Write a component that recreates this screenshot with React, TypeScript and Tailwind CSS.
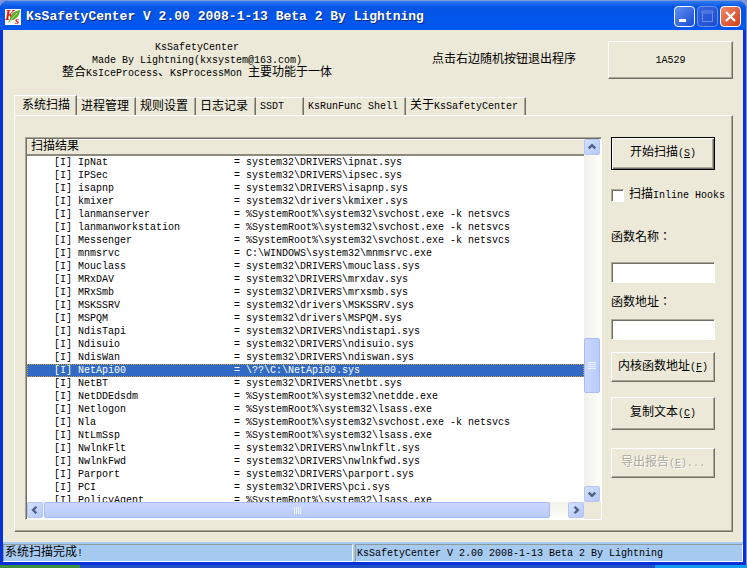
import React from 'react';

interface Entry {
    name: string;
    path: string;
    selected?: boolean;
}

const drv = (file: string) => `system32\\DRIVERS\\${file}`;
const root = (file: string) => `%SystemRoot%\\system32\\${file}`;

const entries: Entry[] = [
    { name: 'IpNat', path: drv('ipnat.sys') },
    { name: 'IPSec', path: drv('ipsec.sys') },
    { name: 'isapnp', path: drv('isapnp.sys') },
    { name: 'kmixer', path: 'system32\\drivers\\kmixer.sys' },
    { name: 'lanmanserver', path: root('svchost.exe -k netsvcs') },
    { name: 'lanmanworkstation', path: root('svchost.exe -k netsvcs') },
    { name: 'Messenger', path: root('svchost.exe -k netsvcs') },
    { name: 'mnmsrvc', path: 'C:\\WINDOWS\\system32\\mnmsrvc.exe' },
    { name: 'Mouclass', path: drv('mouclass.sys') },
    { name: 'MRxDAV', path: drv('mrxdav.sys') },
    { name: 'MRxSmb', path: drv('mrxsmb.sys') },
    { name: 'MSKSSRV', path: 'system32\\drivers\\MSKSSRV.sys' },
    { name: 'MSPQM', path: 'system32\\drivers\\MSPQM.sys' },
    { name: 'NdisTapi', path: drv('ndistapi.sys') },
    { name: 'Ndisuio', path: drv('ndisuio.sys') },
    { name: 'NdisWan', path: drv('ndiswan.sys') },
    { name: 'NetApi00', path: '\\??\\C:\\NetApi00.sys', selected: true },
    { name: 'NetBT', path: drv('netbt.sys') },
    { name: 'NetDDEdsdm', path: root('netdde.exe') },
    { name: 'Netlogon', path: root('lsass.exe') },
    { name: 'Nla', path: root('svchost.exe -k netsvcs') },
    { name: 'NtLmSsp', path: root('lsass.exe') },
    { name: 'NwlnkFlt', path: drv('nwlnkflt.sys') },
    { name: 'NwlnkFwd', path: drv('nwlnkfwd.sys') },
    { name: 'Parport', path: drv('parport.sys') },
    { name: 'PCI', path: drv('pci.sys') },
    { name: 'PolicyAgent', path: root('lsass.exe') },
];

const tabs = [
    { label: '系统扫描', width: 'w-[63px]' },
    { label: '进程管理', width: 'w-[59px]' },
    { label: '规则设置', width: 'w-[60px]' },
    { label: '日志记录', width: 'w-[60px]' },
    { label: 'SSDT', width: 'w-12' },
    { label: 'KsRunFunc Shell', width: 'w-[102px]' },
    { label: '关于KsSafetyCenter', width: 'w-[120px]' },
];

const Mixed: React.FC<{ text: string }> = ({ text }) => (
    <>
        {text.split(/([\u3000-\uffef]+)/).filter(Boolean).map((run, i) =>
            /[\u3000-\uffef]/.test(run) ? (
                <span key={i} className="text-[12px]">{run}</span>
            ) : (
                <span key={i} className="text-[10px]">{run}</span>
            )
        )}
    </>
);

const raised = 'border border-t-white border-l-white border-r-[#716f64] border-b-[#716f64] bg-[#ece9d8] shadow-[inset_-1px_-1px_0_#aca899]';
const sunken = 'border border-t-[#aca899] border-l-[#aca899] border-r-white border-b-white bg-white shadow-[inset_1px_1px_0_#716f64]';

interface PushButtonProps {
    label: string;
    hotkey: string;
    suffix?: string;
    className: string;
    disabled?: boolean;
}

const PushButton: React.FC<PushButtonProps> = ({ label, hotkey, suffix = '', className, disabled }) => (
    <button
        type="button"
        disabled={disabled}
        className={`w-[104px] whitespace-nowrap leading-4 disabled:text-[#aca899] disabled:[text-shadow:1px_1px_0_white] ${className}`}
    >
        <span className="text-[12px]">{label}</span>
        <span className="text-[10px]">(<u>{hotkey}</u>){suffix}</span>
    </button>
);

const arrows = {
    up: 'M4 9l3.5-3.5L11 9',
    down: 'M4 6l3.5 3.5L11 6',
    left: 'M9 4L5.5 7.5 9 11',
    right: 'M6 4l3.5 3.5L6 11',
};

const ScrollButton: React.FC<{ dir: keyof typeof arrows }> = ({ dir }) => (
    <button
        type="button"
        aria-label={`Scroll ${dir}`}
        className="size-4 shrink-0 rounded-xs border border-[#b4c6f5] bg-gradient-to-br from-[#d6e1ff] to-[#b5c8fb]"
    >
        <svg viewBox="0 0 15 15" className="size-full" fill="none" stroke="#4d6185" strokeWidth="2.6">
            <path d={arrows[dir]} />
        </svg>
    </button>
);

const AppIcon = () => (
    <svg viewBox="0 0 16 16" className="size-4 shrink-0">
        <rect width="16" height="16" fill="#fff" />
        <text x="0" y="11" fontSize="14" fontWeight="bold" fontStyle="italic" fontFamily="Liberation Serif, serif" fill="#e0141c">K</text>
        <text x="10" y="15" fontSize="11" fontWeight="bold" fontStyle="italic" fontFamily="Liberation Serif, serif" fill="#e0141c">s</text>
        <path d="M5 10C5 5 9 2 15 1c0 5-3 9-8 10l-4 3z" fill="#5fae2e" />
        <path d="M5 12l7-8" stroke="#b9dd7a" />
    </svg>
);

const TitleBar = () => (
    <header className="flex h-[29px] shrink-0 items-center gap-[5px] rounded-t-lg bg-gradient-to-b from-[#2f7bf0] via-[#0355e6] via-20% to-[#0357f0] pt-[2px] pr-[5px] pl-[5px]">
        <AppIcon />
        <h1 className="flex-1 truncate text-[13px] font-bold text-white [text-shadow:1px_1px_0_#0a2a80]">
            KsSafetyCenter V 2.00 2008-1-13 Beta 2 By Lightning
        </h1>
        <div className="flex gap-[2px]">
            <button type="button" aria-label="Minimize" className="size-[21px] rounded-sm border border-white bg-gradient-to-br from-[#5f8ff5] to-[#1c4bd0]">
                <svg viewBox="0 0 19 19"><path d="M4 12h7v3H4z" fill="#fff" /></svg>
            </button>
            <button type="button" aria-label="Maximize" disabled className="size-[21px] rounded-sm border border-[#6d90ee] bg-gradient-to-br from-[#3565e0] to-[#1c4bd0]">
                <svg viewBox="0 0 19 19"><path d="M4 4h11v2H4zM4.5 6v8.5h10V6" fill="none" stroke="#6b8ce8" /></svg>
            </button>
            <button type="button" aria-label="Close" className="size-[21px] rounded-sm border border-white bg-gradient-to-br from-[#ee8a6a] to-[#cf3a12]">
                <svg viewBox="0 0 19 19"><path d="M5 5l9 9M14 5l-9 9" stroke="#fff" strokeWidth="2.2" /></svg>
            </button>
        </div>
    </header>
);

const ResultList = () => (
    <div className={`flex min-w-0 flex-1 flex-col pt-px pl-px ${sunken}`}>
        <div className="flex min-h-0 flex-1">
            <div className="h-full min-w-0 flex-1 overflow-hidden">
                <table className="w-full border-separate border-spacing-0">
                    <thead>
                        <tr>
                            <th className="h-[17px] border-t border-b-2 border-t-white border-b-[#8d8a7b] bg-[#ece9d8] p-0 pl-1 text-left font-normal leading-[14px]">
                                <Mixed text="扫描结果" />
                            </th>
                        </tr>
                    </thead>
                    <tbody>
                        {entries.map((entry) => (
                            <tr key={entry.name}>
                                <td
                                    className={`h-[13px] p-0 pl-[27px] text-[10px] leading-[13px] whitespace-pre ${
                                        entry.selected ? 'bg-[#316ac5] text-white outline-1 -outline-offset-1 outline-dotted outline-[#c99a4a]' : ''
                                    }`}
                                >
                                    {`[I] ${entry.name.padEnd(26)}= ${entry.path}`}
                                </td>
                            </tr>
                        ))}
                    </tbody>
                </table>
            </div>
            <div className="flex w-[17px] flex-col bg-gradient-to-r from-[#f1f0ea] to-[#fefefb]">
                <ScrollButton dir="up" />
                <div className="flex-[182]" />
                <div className="flex h-[55px] w-4 flex-col items-center justify-center gap-px rounded-xs border border-[#a6bcf5] bg-gradient-to-r from-[#cad8ff] to-[#b8cbfc]">
                    <i className="h-px w-2 bg-[#eef4fe]" />
                    <i className="h-px w-2 bg-[#eef4fe]" />
                    <i className="h-px w-2 bg-[#eef4fe]" />
                    <i className="h-px w-2 bg-[#eef4fe]" />
                </div>
                <div className="flex-[92]" />
                <ScrollButton dir="down" />
            </div>
        </div>
        <div className="flex h-[17px] shrink-0 bg-[#ece9d8]">
            <div className="flex flex-1 gap-px bg-gradient-to-b from-[#f1f0ea] to-[#fefefb]">
                <ScrollButton dir="left" />
                <div className="flex h-4 flex-[506] items-center justify-center gap-px rounded-xs border border-[#a6bcf5] bg-gradient-to-b from-[#cad8ff] to-[#b8cbfc]">
                    <i className="h-[7px] w-px bg-[#eef4fe]" />
                    <i className="h-[7px] w-px bg-[#eef4fe]" />
                    <i className="h-[7px] w-px bg-[#eef4fe]" />
                    <i className="h-[7px] w-px bg-[#eef4fe]" />
                </div>
                <div className="flex-[16]" />
                <ScrollButton dir="right" />
            </div>
            <div className="w-[17px]" />
        </div>
    </div>
);

const SidePanel = () => (
    <div className="flex w-[104px] shrink-0 flex-col leading-4">
        <PushButton
            label="开始扫描"
            hotkey="S"
            className="h-[33px] border border-black bg-[#ece9d8] shadow-[inset_1px_1px_0_white,inset_-1px_-1px_0_#716f64,inset_-2px_-2px_0_#aca899]"
        />
        <label className="mt-[17px] flex items-center gap-[5px] whitespace-nowrap">
            <input type="checkbox" className={`size-[13px] shrink-0 appearance-none ${sunken}`} />
            <span><Mixed text="扫描Inline Hooks" /></span>
        </label>
        <label htmlFor="fn-name" className="mt-6 font-['Noto_Sans_CJK_TC',sans-serif]"><Mixed text="函数名称：" /></label>
        <input id="fn-name" type="text" className={`mt-[18px] h-[21px] w-full px-1 text-[10px] ${sunken}`} />
        <label htmlFor="fn-addr" className="mt-[10px] font-['Noto_Sans_CJK_TC',sans-serif]"><Mixed text="函数地址：" /></label>
        <input id="fn-addr" type="text" className={`mt-[10px] h-[21px] w-full px-1 text-[10px] ${sunken}`} />
        <PushButton label="内核函数地址" hotkey="F" className={`mt-3 h-[30px] ${raised}`} />
        <PushButton label="复制文本" hotkey="C" className={`mt-[15px] h-[33px] ${raised}`} />
        <PushButton label="导出报告" hotkey="E" suffix="..." className={`mt-[18px] h-[30px] ${raised}`} disabled />
    </div>
);

export default function App() {
    return (
        <div className="flex h-screen min-h-[480px] flex-col bg-[#7d97dc] pt-px font-['Liberation_Mono','Noto_Sans_CJK_SC',monospace] text-[12px] text-black">
            <div className="mr-px flex min-h-0 flex-1 flex-col rounded-t-lg bg-[#0831d9]">
                <TitleBar />
                <main className="mx-[3px] flex min-h-0 flex-1 flex-col bg-[#ece9d8] px-[11px] pt-[11px] pb-[10px]">
                    <div className="flex h-[38px] shrink-0 items-center justify-between">
                        <p className="ml-12 text-center leading-3 whitespace-nowrap">
                            <Mixed text="KsSafetyCenter" /><br />
                            <Mixed text="Made By Lightning(kxsystem@163.com)" /><br />
                            <Mixed text="整合KsIceProcess、KsProcessMon 主要功能于一体" />
                        </p>
                        <div className="flex items-center gap-8">
                            <span className="whitespace-nowrap"><Mixed text="点击右边随机按钮退出程序" /></span>
                            <button type="button" className={`-mr-px h-[38px] w-[125px] text-[10px] ${raised}`}>1A529</button>
                        </div>
                    </div>
                    <div role="tablist" className="mt-4 flex h-5 shrink-0 items-end">
                        {tabs.map((tab, i) => (
                            <button
                                key={tab.label}
                                type="button"
                                role="tab"
                                aria-selected={i === 0}
                                className={`shrink-0 border-t border-r border-t-white border-r-[#716f64] text-left leading-4 whitespace-nowrap shadow-[inset_-1px_0_0_#aca899] ${tab.width} ${
                                    i === 0 ? 'h-full border-l border-l-white pl-[7px]' : 'h-[18px] pl-1'
                                }`}
                            >
                                <Mixed text={tab.label} />
                            </button>
                        ))}
                    </div>
                    <section className={`-mr-px flex min-h-0 flex-1 gap-[9px] pt-[21px] pr-[17px] pb-[11px] pl-[10px] ${raised}`}>
                        <ResultList />
                        <SidePanel />
                    </section>
                </main>
                <footer className="mx-[3px] mb-[3px] flex h-5 shrink-0 gap-[2px] bg-[#a6caf0] pt-[2px] leading-4">
                    <div className="w-[350px] truncate border border-t-[#8f9a9a] border-r-white border-b-white border-l-[#8f9a9a] pl-px">
                        <Mixed text="系统扫描完成!" />
                    </div>
                    <div className="flex-1 truncate border border-t-[#8f9a9a] border-r-white border-b-white border-l-[#8f9a9a] pl-px">
                        <Mixed text="KsSafetyCenter V 2.00 2008-1-13 Beta 2 By Lightning" />
                    </div>
                </footer>
            </div>
            <div className="flex h-[3px] shrink-0">
                <div className="w-20 bg-[#3c8f3c]" />
                <div className="flex-1 bg-[#1f50c8]" />
                <div className="w-[92px] bg-[#149bee]" />
            </div>
        </div>
    );
}
